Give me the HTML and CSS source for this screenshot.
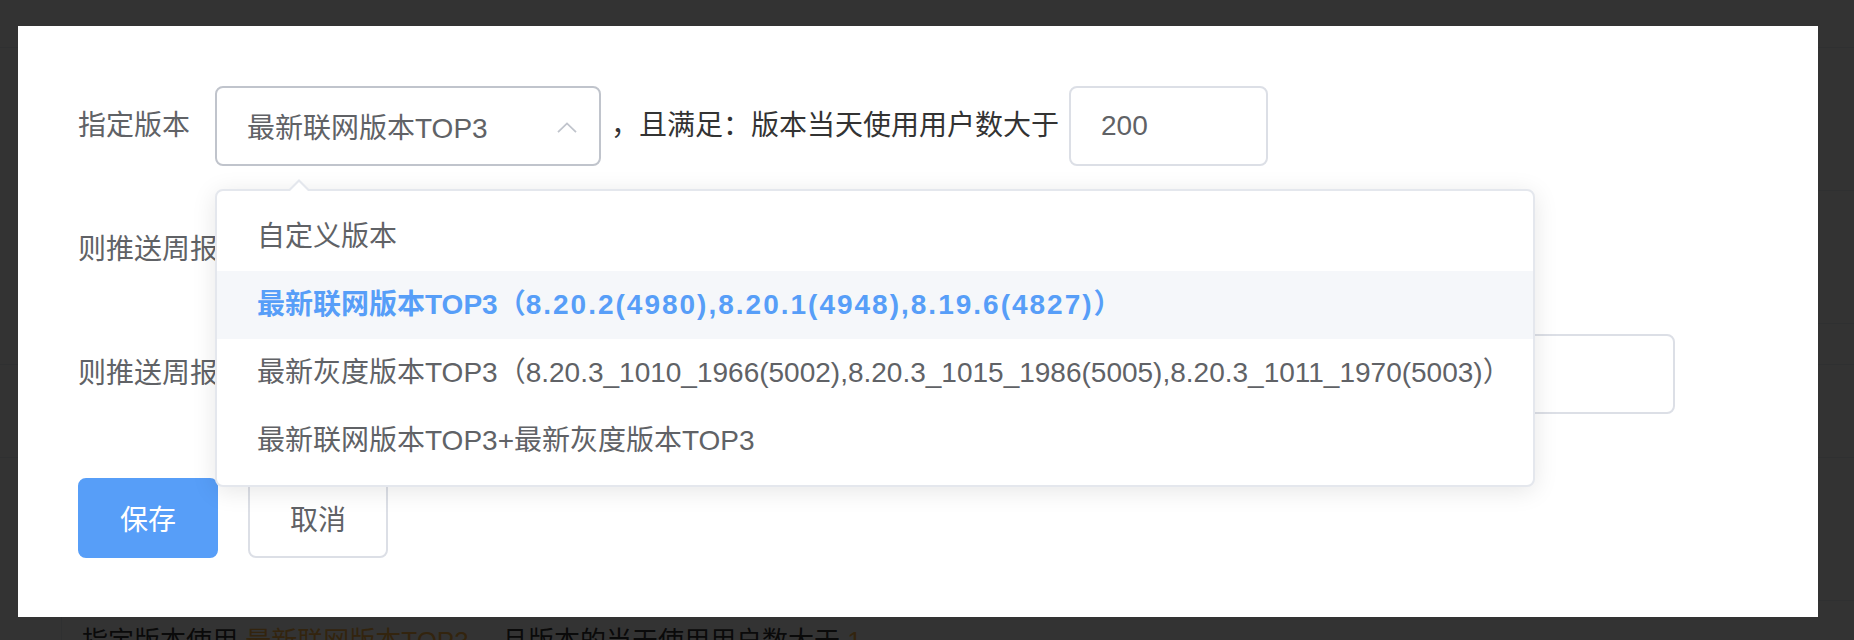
FILE: index.html
```html
<!DOCTYPE html>
<html lang="zh-CN">
<head>
    <meta charset="UTF-8">
    <title>周报推送规则</title>
    <link rel="stylesheet" href="styles.css">
</head>
<body>
<div class="page">
    <div class="page-head"></div>
    <div class="panel">
        <div class="panel-row row-a"></div>
        <div class="panel-row row-b"></div>
    </div>
    <div class="bar row-c"></div>
    <div class="bar row-d"></div>
    <div class="panel">
        <div class="panel-row row-e"></div>
        <div class="panel-row row-f">
            指定版本使用 <span class="hl">最新联网版本TOP3</span> ，且版本的当天使用用户数大于 <span class="hl">1</span>
        </div>
    </div>
</div>

<div class="mask"></div>

<div class="dialog">
    <form class="rule-form">
        <div class="form-row">
            <span class="form-label">指定版本</span>
            <div class="select is-open">
                <span class="select-value">最新联网版本TOP3</span>
                <svg class="select-arrow" width="20" height="11" viewBox="0 0 20 11">
                    <path d="M1 10.2 L10 1.4 L19 10.2" fill="none" stroke="#c0c4cc" stroke-width="1.8"/>
                </svg>
                <ul class="dropdown">
                    <li class="option">自定义版本</li>
                    <li class="option is-selected">最新联网版本TOP3（<span class="ver">8.20.2(4980),8.20.1(4948),8.19.6(4827)</span>）</li>
                    <li class="option">最新灰度版本TOP3（8.20.3_1010_1966(5002),8.20.3_1015_1986(5005),8.20.3_1011_1970(5003)）</li>
                    <li class="option">最新联网版本TOP3+最新灰度版本TOP3</li>
                </ul>
            </div>
            <span class="form-text">，且满足：版本当天使用用户数大于</span>
            <input class="input input-num" type="text" value="200">
        </div>

        <div class="form-row">
            <span class="form-label">则推送周报给：</span>
            <div class="select">
                <span class="select-value">全部成员</span>
            </div>
        </div>

        <div class="form-row">
            <span class="form-label">则推送周报至以下邮箱：</span>
            <input class="input input-mail" type="text" value="">
        </div>

        <div class="form-actions">
            <button type="button" class="btn btn-primary">保存</button>
            <button type="button" class="btn">取消</button>
        </div>
    </form>
</div>
</body>
</html>
```

FILE: styles.css
```css
body {
    margin: 0;
    background: #fff;
    font-family: "Liberation Sans", "Noto Sans CJK SC", sans-serif;
    overflow: hidden;
}

/* page underneath the dialog */
.page {
    height: 640px;
    color: #333;
}
.page-head {
    height: 47px;
    border-bottom: 1px solid #ebeef5;
}
.panel {
    margin-left: 61px;
    border-left: 1px solid #ebeef5;
}
.panel-row {
    border-bottom: 1px solid #ebeef5;
}
.bar {
    border-bottom: 1px solid #ebeef5;
}
.row-a { height: 142px; }
.row-b { height: 132px; }
.row-c { height: 40px; }
.row-d { height: 92px; }
.row-e { height: 142px; }
.row-f {
    border-bottom: 0;
    padding: 22px 0 0 20px;
    font-size: 26px;
    line-height: 36px;
    white-space: nowrap;
}
.row-f .hl {
    color: #ffb347;
}

.mask {
    position: fixed;
    inset: 0;
    background: rgba(0, 0, 0, 0.8);
}

/* dialog */
.dialog {
    position: absolute;
    left: 18px;
    top: 26px;
    width: 1800px;
    box-sizing: border-box;
    padding: 60px 60px 59px;
    background: #fff;
}
.form-row {
    display: flex;
    align-items: center;
    height: 80px;
    margin-bottom: 44px;
    font-size: 28px;
    white-space: nowrap;
}
.form-label {
    color: #606266;
    padding-right: 25px;
    line-height: 40px;
}
.form-text {
    color: #333;
    margin: 0 10px;
    line-height: 40px;
}

.select {
    position: relative;
    display: flex;
    align-items: center;
    justify-content: space-between;
    width: 386px;
    height: 80px;
    box-sizing: border-box;
    padding: 0 22px 0 30px;
    border: 2px solid #dcdfe6;
    border-radius: 8px;
    color: #606266;
}
.select.is-open {
    border-color: #c0c4cc;
}
.select-arrow {
    display: block;
    margin-top: 2px;
}

.dropdown {
    position: absolute;
    top: calc(100% + 25px);
    left: -2px;
    width: 1320px;
    box-sizing: border-box;
    margin: 0;
    padding: 12px 0 10px;
    list-style: none;
    background: #fff;
    border: 2px solid #e4e7ed;
    border-radius: 8px;
    box-shadow: 0 4px 24px rgba(0, 0, 0, 0.1);
    z-index: 5;
}
.dropdown::before,
.dropdown::after {
    content: "";
    position: absolute;
    left: 70px;
    border: 12px solid transparent;
    border-top-width: 0;
}
.dropdown::before {
    top: -12px;
    border-bottom-color: #e4e7ed;
}
.dropdown::after {
    top: -9px;
    border-bottom-color: #fff;
}
.option {
    height: 68px;
    line-height: 68px;
    padding: 0 40px;
    color: #606266;
    white-space: nowrap;
}
.option.is-selected {
    color: #579ef8;
    font-weight: bold;
    background: #f5f7fa;
}
.option .ver {
    letter-spacing: 2px;
}

.input {
    height: 80px;
    box-sizing: border-box;
    padding: 0 30px;
    border: 2px solid #dcdfe6;
    border-radius: 8px;
    font: 28px "Liberation Sans", "Noto Sans CJK SC", sans-serif;
    color: #606266;
    outline: none;
}
.input-num {
    width: 199px;
}
.input-mail {
    margin-left: 10px;
    width: 1254px;
}

.form-actions {
    display: flex;
    margin-top: 64px;
}
.btn {
    height: 80px;
    padding: 0 40px;
    border: 2px solid #dcdfe6;
    border-radius: 8px;
    background: #fff;
    color: #606266;
    font: 28px "Liberation Sans", "Noto Sans CJK SC", sans-serif;
}
.btn + .btn {
    margin-left: 30px;
}
.btn-primary {
    background: #579ef8;
    border-color: #579ef8;
    color: #fff;
}
```
